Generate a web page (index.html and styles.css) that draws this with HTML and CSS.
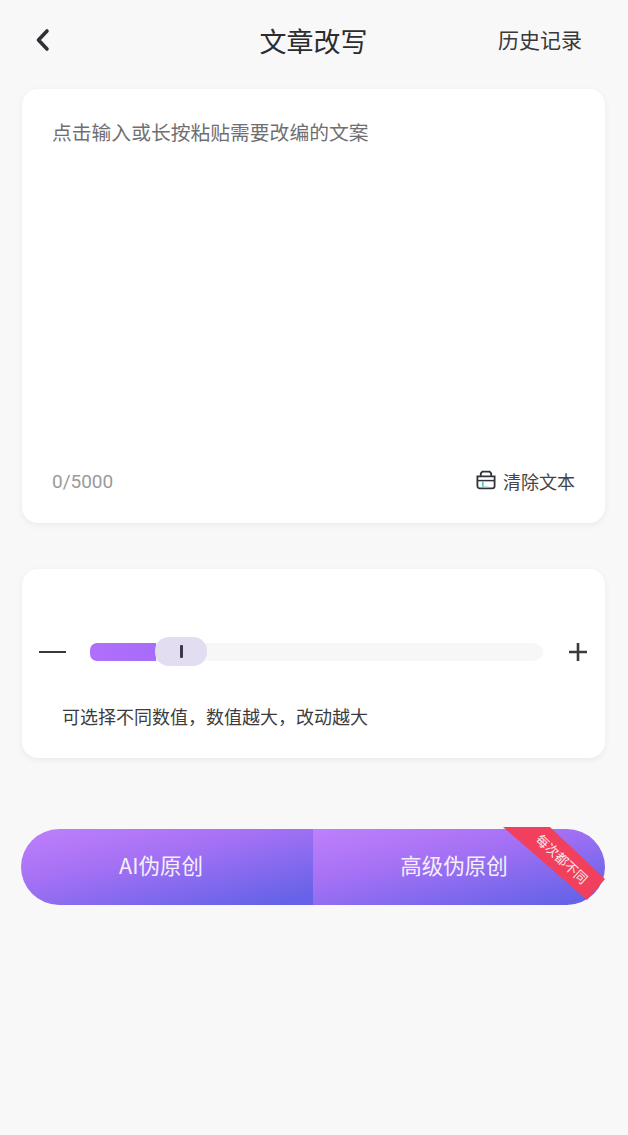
FILE: index.html
```html
<!DOCTYPE html>
<html lang="zh">
<head>
<meta charset="utf-8">
<title>文章改写</title>
<link rel="stylesheet" href="styles.css">
</head>
<body>
<div class="page">
  <header class="header">
    <svg class="back" width="16" height="24" viewBox="0 0 16 24"><path d="M12 3 L3.5 12 L12 21" fill="none" stroke="#2f3033" stroke-width="3.6" stroke-linecap="round" stroke-linejoin="round"/></svg>
    <h1 class="title">文章改写</h1>
    <span class="history">历史记录</span>
  </header>

  <section class="card input-card">
    <p class="placeholder">点击输入或长按粘贴需要改编的文案</p>
    <div class="input-foot">
      <span class="count">0/5000</span>
      <span class="clear">
        <svg width="20" height="20" viewBox="0 0 20 20"><path d="M4.8 6.4V3.4L6.4 1.6h7.2l1.6 1.8v3" fill="none" stroke="#30343a" stroke-width="1.8"/><path d="M1.4 6.4h17.2v9.6a2.4 2.4 0 0 1-2.4 2.4H3.8a2.4 2.4 0 0 1-2.4-2.4z" fill="none" stroke="#30343a" stroke-width="1.8"/><path d="M1.6 10.6h16.8" stroke="#30343a" stroke-width="1.5"/><path d="M6.8 11.4v5.4" stroke="#58c4c4" stroke-width="1.7"/><path d="M8 16.8h4.4" stroke="#a8dcdc" stroke-width="1.1"/></svg>
        <span class="clear-label">清除文本</span>
      </span>
    </div>
  </section>

  <section class="card slider-card">
    <div class="slider-row">
      <span class="minus"></span>
      <div class="track">
        <div class="fill"></div>
        <div class="thumb"><i class="grip"></i></div>
      </div>
      <svg class="plus" width="20" height="20" viewBox="0 0 20 20"><path d="M10 1v18M1 10h18" stroke="#3a3b3f" stroke-width="2.6"/></svg>
    </div>
    <p class="hint">可选择不同数值，数值越大，改动越大</p>
  </section>

  <div class="actions">
    <button class="action action-ai"><span class="action-label">AI伪原创</span></button>
    <button class="action action-pro"><span class="action-label">高级伪原创</span></button>
    <svg class="ribbon" width="104" height="76" viewBox="0 0 104 76"><polygon points="0,0 47,0 102,52 84,73" fill="#f0405d"/></svg>
    <span class="ribbon-text">每次都不同</span>
  </div>
</div>
</body>
</html>
```
FILE: styles.css
```css
* { box-sizing: border-box; }
html, body { margin: 0; padding: 0; }
body {
  width: 628px;
  height: 1135px;
  background: #f9f8f9;
  font-family: "Noto Sans CJK SC", "Liberation Sans", sans-serif;
  overflow: hidden;
}
.page { display: flex; flex-direction: column; padding: 0 23px 0 22px; }
.header {
  height: 89px;
  display: flex;
  align-items: center;
  justify-content: space-between;
  padding: 0 23px 7px 13px;
  position: relative;
}
.back { display: block; margin-top: -2px; }
.title {
  position: absolute;
  left: 0;
  right: 0;
  top: 23px;
  margin: 0;
  text-align: center;
  font-size: 27px;
  line-height: 36px;
  font-weight: 400;
  color: #2c2c2e;
}
.history { font-size: 21px; line-height: 30px; color: #38383a; margin-top: -4px; }
.card {
  background: #fff;
  border-radius: 16px;
  box-shadow: 0 2px 7px rgba(0, 0, 0, 0.06);
}
.input-card {
  height: 434px;
  padding: 30px 30px 28px 30px;
  display: flex;
  flex-direction: column;
  justify-content: space-between;
}
.placeholder { margin: 0; font-size: 19.8px; line-height: 26px; color: #6f6f72; }
.input-foot { display: flex; justify-content: space-between; align-items: center; }
.count { font-family: "Roboto", "Liberation Sans", sans-serif; font-size: 19px; line-height: 26px; color: #9a9a9c; }
.clear { display: flex; align-items: center; gap: 7px; font-size: 18px; line-height: 26px; color: #444447; }
.clear svg { margin-top: -4px; }
.clear-label { margin-top: -2px; }
.slider-card { height: 189px; margin-top: 46px; padding: 68px 17px 0 17px; }
.slider-row { display: flex; align-items: center; height: 30px; }
.minus { width: 27px; height: 2px; background: #37383b; flex: none; }
.track {
  flex: none;
  margin-left: 24px;
  width: 453px;
  height: 18px;
  border-radius: 9px;
  background: #f7f7f7;
  position: relative;
}
.fill {
  width: 66px;
  height: 18px;
  border-radius: 7px 0 0 7px;
  background: linear-gradient(90deg, #b06ffb, #a76cf9);
}
.thumb {
  position: absolute;
  left: 65px;
  top: -6px;
  width: 52px;
  height: 29px;
  border-radius: 14px;
  background: #e2ddf0;
  display: flex;
  align-items: center;
  justify-content: center;
}
.grip { width: 3px; height: 13px; border-radius: 1px; background: #3a3a4c; }
.plus { margin-left: 25px; flex: none; }
.hint { margin: 36px 0 0 23px; font-size: 18px; line-height: 26px; color: #3c3c3e; }
.actions {
  margin-top: 71px;
  margin-left: -1px;
  height: 76px;
  display: flex;
  position: relative;
}
.action {
  border: 0;
  padding: 0 0 5px 0;
  color: #f5effc;
  font-family: inherit;
  font-size: 21.5px;
  background: linear-gradient(168deg, #bf80fb 0%, #a671f5 38%, #6663e8 92%);
}
.action-ai { flex: 0 0 292px; border-radius: 38px 0 0 38px; padding-right: 12px; }
.action-pro { flex: 1; border-radius: 0 38px 38px 0; padding-right: 10px; }
.ribbon { position: absolute; left: 482px; top: -2px; }
.ribbon-text {
  position: absolute;
  left: 508px;
  top: 22px;
  width: 66px;
  text-align: center;
  white-space: nowrap;
  font-size: 13px;
  line-height: 16px;
  color: #fde6ea;
  transform: rotate(43deg);
}
```
